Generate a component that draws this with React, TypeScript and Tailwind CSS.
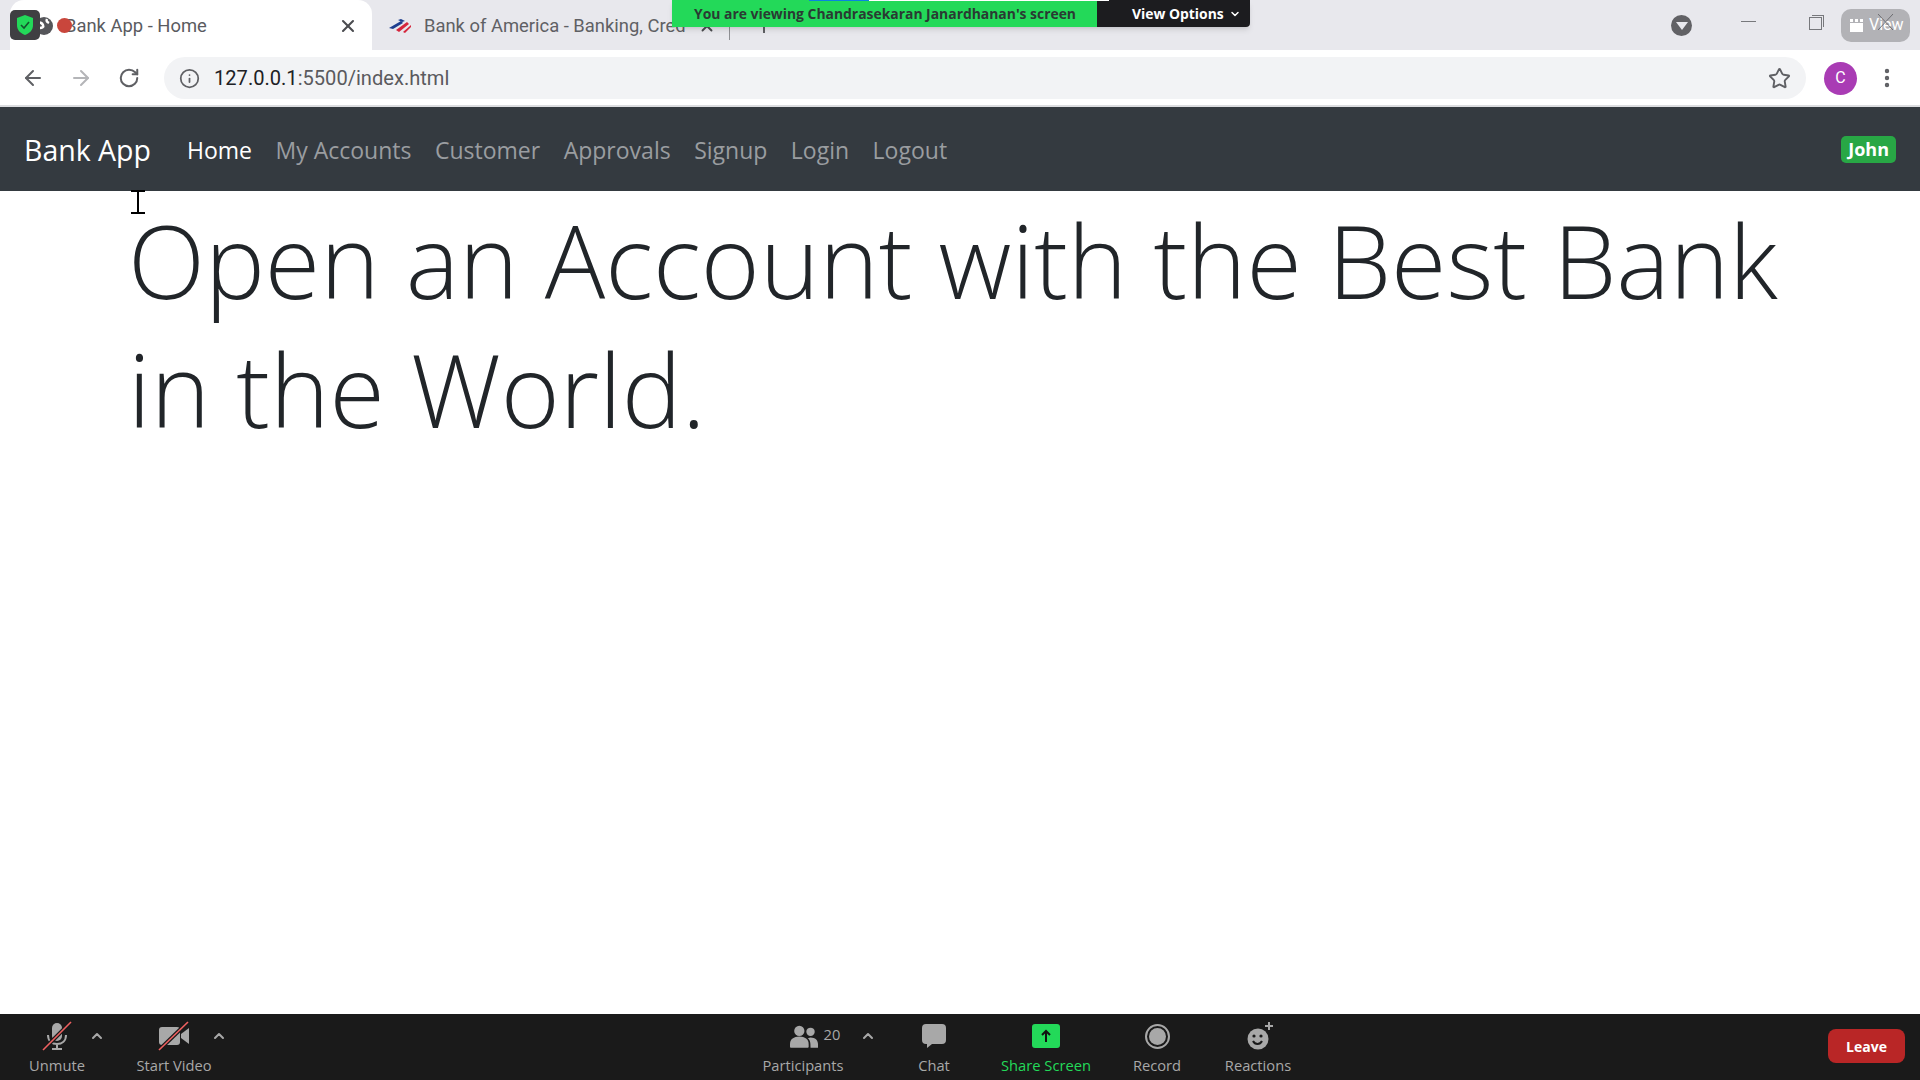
import { Star, RotateCw, ArrowLeft, ArrowRight, Info, X, ChevronUp, ChevronDown, EllipsisVertical } from "lucide-react";

const NAV_LINKS = ["My Accounts", "Customer", "Approvals", "Signup", "Login", "Logout"];

function TabStrip() {
  return (
    <div className="relative flex h-[50px] items-end bg-[#e8e8ed] font-['Roboto',sans-serif] text-[18.4px]">
      <div className="ml-[10px] flex h-[50px] w-[362px] items-center rounded-t-[14px] bg-white pl-[55px] pr-[14px] pt-[1px] text-[#5a5b5f]">
        <span className="flex-1 truncate">Bank App - Home</span>
        <X size={20} strokeWidth={2.5} className="text-[#4b4c50]" />
      </div>
      <div className="flex h-[50px] w-[357px] items-center pl-[16px] pr-[13px] pt-[1px] text-[#5f6064]">
        <svg width="24" height="16" viewBox="0 0 24 16" className="mr-[12px] shrink-0">
          <path d="M1 10 L13 3 L15 5 L5 11Z" fill="#1f3f8f" />
          <path d="M8 12 L19 4 L21 6 L11 14Z" fill="#d5263c" />
          <path d="M13 1 L17 3 L14 4 L10 2Z" fill="#1f3f8f" />
          <path d="M15 14 L23 7 L23 9 L17 15Z" fill="#d5263c" />
        </svg>
        <span className="min-w-0 flex-1 overflow-hidden whitespace-nowrap">Bank of America - Banking, Cred</span>
        <X size={18} strokeWidth={2.5} className="ml-[6px] shrink-0 text-[#4b4c50]" />
      </div>
      <div className="mb-[10px] h-[32px] w-px bg-[#8f9094]" />
      <div className="mb-[17px] ml-[33px] h-[16px] w-[2px] bg-[#5f6064]" />
      <div className="ml-auto mr-[10px] flex h-[50px] items-center">
        <div className="mr-[49px] flex h-[21px] w-[21px] items-center justify-center rounded-full bg-[#616165]">
          <div className="mt-[2px] h-0 w-0 border-x-[6px] border-t-[8px] border-x-transparent border-t-[#e8e8ed]" />
        </div>
        <div className="mb-[7px] mr-[53px] h-px w-[15px] bg-[#77787c]" />
        <div className="relative mb-[3px] mr-[19px] h-[13px] w-[13px] border border-[#77787c]">
          <div className="absolute -right-[3px] -top-[3px] h-[12px] w-[12px] border-r border-t border-[#77787c]" />
        </div>
        <div className="relative flex h-[33px] w-[69px] items-center gap-[6px] rounded-[10px] bg-[#b2b2b6] pl-[9px] text-[16px] text-white">
          <svg width="13" height="13" viewBox="0 0 13 13">
            <path d="M0 4h13v9H0ZM0 0h3v3H0ZM5 0h3v3H5ZM10 0h3v3h-3Z" fill="#fff" />
          </svg>
          <span>View</span>
          <svg width="15" height="16" viewBox="0 0 15 16" className="absolute left-[37px] top-[5px]">
            <path d="M0 0l15 16M15 0L0 16" stroke="#5a5b5f" strokeWidth="0.8" />
          </svg>
        </div>
      </div>
    </div>
  );
}

function AddressBar() {
  return (
    <div className="flex h-[55px] items-center bg-white pt-[1px] text-[#5f6064]">
      <ArrowLeft size={24} strokeWidth={2} className="ml-[21px]" />
      <ArrowRight size={24} strokeWidth={2} className="ml-[24px] text-[#b4b5b8]" />
      <RotateCw size={22} strokeWidth={2.2} className="ml-[25px]" />
      <div className="ml-[24px] flex h-[42px] flex-1 items-center rounded-full bg-[#f2f3f5] pl-[15px] pr-[15px]">
        <Info size={21} strokeWidth={2} />
        <span className="ml-[14px] mt-[1px] font-['Roboto',sans-serif] text-[20.1px] text-[#5a5a5e]">
          <span className="text-[#202124]">127.0.0.1</span>:5500/index.html
        </span>
        <Star size={23} strokeWidth={2} className="ml-auto" />
      </div>
      <div className="ml-[18px] flex h-[33px] w-[33px] items-center justify-center rounded-full bg-[#a93cb4] font-['Roboto',sans-serif] text-[16px] text-white">
        C
      </div>
      <EllipsisVertical size={24} strokeWidth={2.4} className="ml-[18px] mr-[21px]" />
    </div>
  );
}

function Navbar() {
  return (
    <nav className="flex h-[86px] items-center border-t-[2px] border-[#dcdde0] bg-[#343a40] px-[24px] pt-[3px] font-['Open_Sans',sans-serif]">
      <a className="mr-[36px] text-[28.5px] text-white">Bank App</a>
      <div className="flex gap-[23.5px] text-[23px] text-[#9a9da0]">
        <a className="text-white">Home</a>
        {NAV_LINKS.map((l) => (
          <a key={l}>{l}</a>
        ))}
      </div>
      <span className="ml-auto -mt-[2px] rounded-[5px] bg-[#28a745] px-[7px] py-[2px] text-[18px] font-bold leading-[23px] text-white">John</span>
    </nav>
  );
}

function ToolbarItem({ label, icon, className = "w-[80px]", green = false }: { label: string; icon: React.ReactNode; className?: string; green?: boolean }) {
  return (
    <div className={`flex flex-col items-center ${className}`}>
      <div className="flex h-[36px] items-center justify-center">{icon}</div>
      <span className={`mt-[1px] whitespace-nowrap text-[14.7px] leading-[20px] ${green ? "text-[#23d959]" : "text-[#a8a8a8]"}`}>{label}</span>
    </div>
  );
}

const Caret = ({ className = "" }: { className?: string }) => (
  <ChevronUp size={16} strokeWidth={3} className={`mt-[10px] text-[#a8a8a8] ${className}`} />
);

function ZoomBar() {
  return (
    <div className="flex h-[66px] shrink-0 items-start bg-[#1a1a1a] pt-[4px] font-['Open_Sans',sans-serif]">
      <ToolbarItem
        className="ml-[18px] w-[78px]"
        label="Unmute"
        icon={
          <svg width="30" height="30" viewBox="0 0 30 30">
            <rect x="10" y="2" width="10" height="18" rx="5" fill="#a8a8a8" />
            <path d="M6 14c0 6 4 9 9 9s9-3 9-9M15 23v4M10 28h10" stroke="#a8a8a8" strokeWidth="2" fill="none" />
            <path d="M1 29 L29 1" stroke="#1a1a1a" strokeWidth="4" />
            <path d="M1 29 L29 1" stroke="#f06060" strokeWidth="1.6" />
          </svg>
        }
      />
      <Caret className="-ml-[7px]" />
      <ToolbarItem
        className="ml-[19px] w-[100px]"
        label="Start Video"
        icon={
          <svg width="32" height="30" viewBox="0 0 32 30">
            <rect x="1" y="6" width="21" height="18" rx="3" fill="#a8a8a8" />
            <path d="M23 13 L31 7 V23 L23 17Z" fill="#a8a8a8" />
            <path d="M1 29 L30 1" stroke="#1a1a1a" strokeWidth="4" />
            <path d="M1 29 L30 1" stroke="#f06060" strokeWidth="1.6" />
          </svg>
        }
      />
      <Caret className="-ml-[13px]" />
      <div className="ml-[530px] flex items-start">
        <div className="flex w-[92px] flex-col items-center">
          <div className="ml-[24px] flex h-[36px] items-center gap-[6px] text-[14.7px] text-[#a8a8a8]">
            <svg width="28" height="23" viewBox="0 0 30 24">
              <circle cx="10" cy="6" r="5.5" fill="#a8a8a8" />
              <path d="M0 20c0-5 4-8 10-8s10 3 10 8v3a1 1 0 0 1-1 1H1a1 1 0 0 1-1-1Z" fill="#a8a8a8" />
              <circle cx="22" cy="7" r="4.5" fill="#a8a8a8" />
              <path d="M22 13c5 0 8 3 8 7v4h-8c0-4 0-8-3-10Z" fill="#a8a8a8" />
            </svg>
            <span className="-mt-[3px]">20</span>
          </div>
          <span className="mt-[1px] text-[14.7px] leading-[20px] text-[#a8a8a8]">Participants</span>
        </div>
        <Caret className="ml-[11px]" />
        <ToolbarItem
          className="ml-[33px] w-[50px]"
          label="Chat"
          icon={
            <svg width="24" height="24" viewBox="0 0 24 24">
              <path d="M4 0h16a4 4 0 0 1 4 4v12a4 4 0 0 1-4 4H10l-5 4v-4H4a4 4 0 0 1-4-4V4a4 4 0 0 1 4-4Z" fill="#a8a8a8" />
            </svg>
          }
        />
        <ToolbarItem
          className="ml-[37px] w-[100px]"
          label="Share Screen"
          green
          icon={
            <div className="flex h-[24px] w-[28px] items-center justify-center rounded-[3px] bg-[#23d959]">
              <svg width="12" height="14" viewBox="0 0 12 14">
                <path d="M6 13V2M2 6l4-4 4 4" stroke="#111" strokeWidth="2" fill="none" />
              </svg>
            </div>
          }
        />
        <ToolbarItem
          className="ml-[31px] w-[60px]"
          label="Record"
          icon={
            <div className="flex h-[25px] w-[25px] items-center justify-center rounded-full border-[2px] border-[#a8a8a8]">
              <div className="h-[17px] w-[17px] rounded-full bg-[#a8a8a8]" />
            </div>
          }
        />
        <ToolbarItem
          className="ml-[31px] w-[80px]"
          label="Reactions"
          icon={
            <svg width="30" height="30" viewBox="0 0 30 30" className="ml-[4px]">
              <circle cx="13" cy="18" r="10.5" fill="#a8a8a8" />
              <circle cx="9" cy="15" r="1.6" fill="#1a1a1a" />
              <circle cx="16" cy="15" r="1.6" fill="#1a1a1a" />
              <path d="M8 20c2 4 7 4 9 0" stroke="#1a1a1a" strokeWidth="2" fill="none" />
              <path d="M24 1v8M20 5h8" stroke="#a8a8a8" strokeWidth="2" />
            </svg>
          }
        />
      </div>
      <button type="button" className="ml-auto mr-[15px] mt-[11px] h-[34px] w-[77px] rounded-[8px] bg-[#b92626] text-[14px] font-bold text-white">
        Leave
      </button>
    </div>
  );
}

export default function App() {
  return (
    <div className="relative flex h-screen w-full flex-col overflow-hidden bg-white">
      <TabStrip />
      <AddressBar />
      <Navbar />
      <main className="flex-1 px-[128px] pt-[5px]">
        <h1 className="font-['Open_Sans',sans-serif] text-[100.7px] font-light leading-[129px] text-[#212529]">
          Open an Account with the Best Bank in the World.
        </h1>
      </main>
      <ZoomBar />

      {/* zoom banner */}
      <div className="absolute left-[672px] top-0 flex h-[27px] font-['Open_Sans',sans-serif] text-[13.9px] font-bold shadow-md">
        <div className="flex w-[425px] items-center bg-[#23d959] pl-[22px] pt-[1px] text-[#2a3a33]">
          You are viewing Chandrasekaran Janardhanan's screen
        </div>
        <div className="flex w-[153px] items-center gap-[5px] rounded-br-[4px] bg-[#1c1c1f] pl-[35px] pt-[1px] text-white">
          View Options
          <ChevronDown size={12} strokeWidth={3} />
        </div>
        <div className="absolute left-[137px] top-0 h-px w-[60px] bg-[#0a84e0]" />
        <div className="absolute left-[197px] top-0 h-px w-[240px] bg-white" />
      </div>

      {/* zoom shield + favicons over the tab */}
      <svg width="20" height="20" viewBox="0 0 20 20" className="absolute left-[34px] top-[16px]">
        <circle cx="10" cy="10" r="9" fill="#55565a" />
        <path d="M3 7c3-1 5 0 6 2s-1 3-3 3-3 2-2 4M13 3c-1 2 0 3 2 4" stroke="#fff" strokeWidth="2.5" fill="none" />
      </svg>
      <div className="absolute left-[10px] top-[10px] flex h-[30px] w-[30px] items-center justify-center rounded-[5px] bg-[#3f3f42]">
        <svg width="18" height="22" viewBox="0 0 18 22">
          <path d="M9 1l8 3v7c0 5-3 8-8 10-5-2-8-5-8-10V4Z" fill="#23d959" />
          <path d="M5 11l3 3 5-6" stroke="#14532d" strokeWidth="1.6" fill="none" />
        </svg>
      </div>
      <div className="absolute left-[57px] top-[18px] h-[15px] w-[15px] rounded-full bg-[#c9463c]" />

      {/* text cursor */}
      <svg width="14" height="24" viewBox="0 0 14 24" className="absolute left-[131px] top-[190px]">
        <path d="M0 1h14M7 1v22M0 23h14" stroke="#000" strokeWidth="2" fill="none" />
      </svg>
    </div>
  );
}
